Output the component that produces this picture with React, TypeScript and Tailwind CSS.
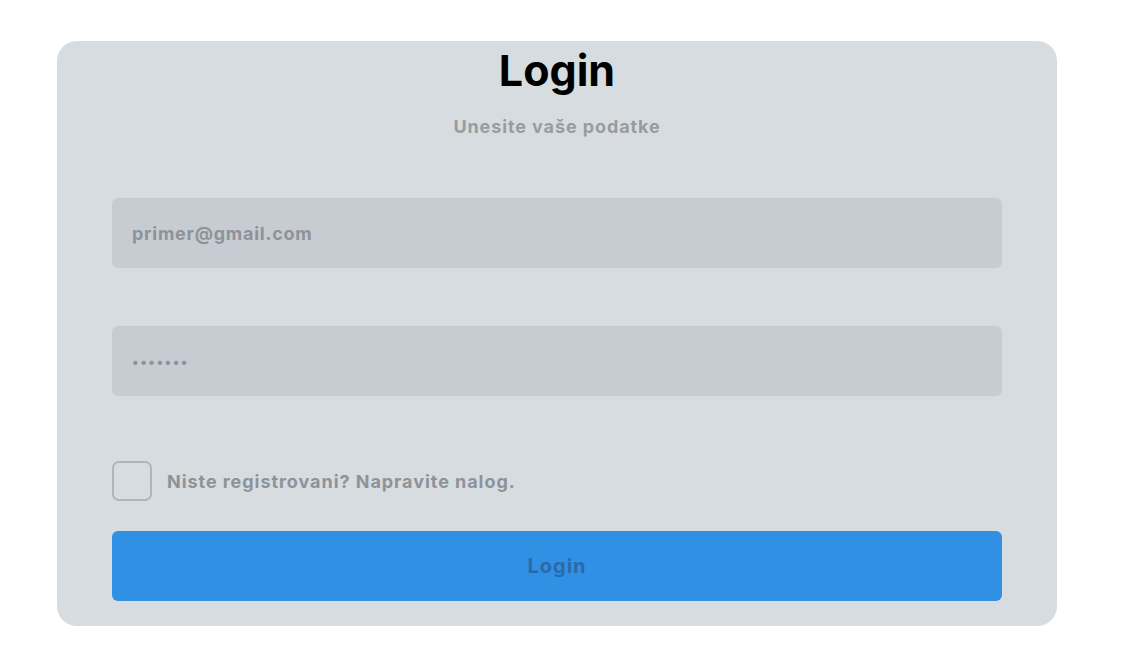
export default function App() {
  return (
    <div className="min-h-screen bg-white pt-[41px] pl-[57px]" style={{ fontFamily: 'Inter, "Noto Sans", sans-serif' }}>
      <div className="w-[1000px] rounded-[20px] bg-[#d7dce0] px-[55px] pb-[25px]">
        <h1 className="text-center text-[43px] font-bold leading-[58px] text-black">Login</h1>
        <p className="mt-[16px] text-center text-[18px] font-bold leading-[24px] tracking-[0.9px] text-[#979ca1]">Unesite vaše podatke</p>

        <form className="mt-[59px] flex flex-col" onSubmit={(e) => e.preventDefault()}>
          <input
            type="email"
            placeholder="primer@gmail.com"
            className="h-[70px] w-full rounded-[6px] bg-[#c6ccd2] px-[20px] text-[18px] font-bold tracking-[0.75px] text-gray-700 outline-none placeholder:text-[#8d9399]"
          />
          <input
            type="password"
            placeholder="•••••••"
            className="mt-[58px] h-[70px] w-full rounded-[6px] bg-[#c6ccd2] px-[20px] text-[14px] font-bold tracking-[1.5px] text-gray-700 outline-none placeholder:text-[#8d9399]"
          />

          <label className="mt-[65px] flex items-center gap-[15px]">
            <input type="checkbox" className="h-[40px] w-[40px] appearance-none rounded-[7px] border-2 border-[#aeb5bc] bg-transparent" />
            <span className="text-[18px] font-bold tracking-[0.95px] text-[#8d9399]">Niste registrovani? Napravite nalog.</span>
          </label>

          <button
            type="submit"
            className="mt-[30px] h-[70px] w-full rounded-[6px] bg-[#3090e4] text-[20px] font-bold tracking-[1px] text-[#2a6aa8]"
          >
            Login
          </button>
        </form>
      </div>
    </div>
  );
}
